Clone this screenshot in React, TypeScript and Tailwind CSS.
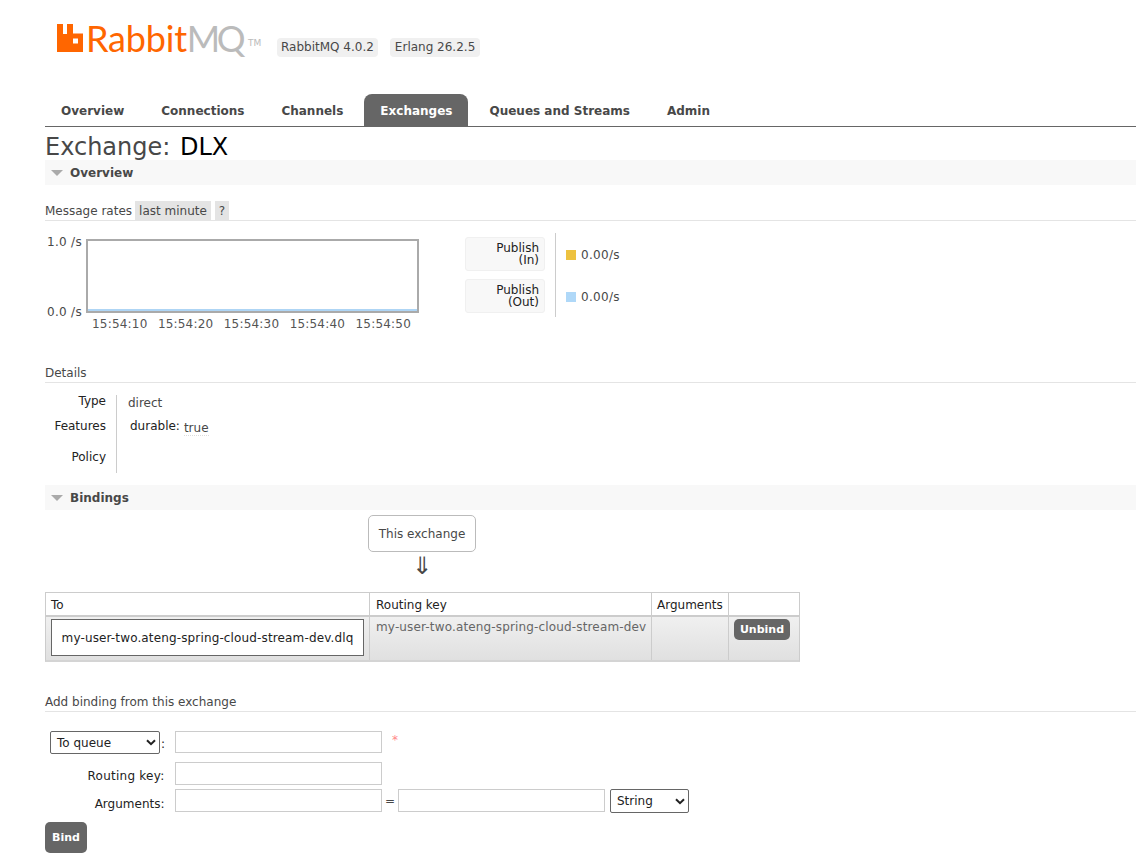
const Section = ({ title }: { title: string }) => (
  <div className="flex items-center h-[25px] bg-[#f8f8f8] pl-[6px] gap-[7px] text-[12px] font-bold text-[#484848]">
    <svg width="12" height="6" viewBox="0 0 12 6">
      <polygon points="0,0 12,0 6,6" fill="#aaaaaa" />
    </svg>
    <span>{title}</span>
  </div>
);

const SubHead = ({ children }: { children: React.ReactNode }) => (
  <div className="flex items-start gap-[3px] border-b border-[#e4e4e4] h-[20px] leading-[21px] text-[12px] text-[#484848]">
    {children}
  </div>
);

const tabs = ["Overview", "Connections", "Channels", "Exchanges", "Queues and Streams", "Admin"];
const times = ["15:54:10", "15:54:20", "15:54:30", "15:54:40", "15:54:50"];

function Chart() {
  return (
    <div className="flex h-[100px]">
      <div className="w-[41px] flex flex-col justify-between h-[88px] -mt-[1px] pr-[4px] text-[12px] text-[#484848] text-right whitespace-nowrap">
        <div className="-ml-[4px] tracking-[0.3px]">1.0 /s</div>
        <div className="-ml-[4px] tracking-[0.3px]">0.0 /s</div>
      </div>
      <div className="w-[333px] pt-[5px]">
        <div className="h-[74px] border-2 border-[#aaaaaa] bg-white flex flex-col justify-end">
          <div className="h-[2px] bg-[#aed5f5]" />
        </div>
        <div className="flex justify-between pl-[6px] pr-[8px] mt-[2px] text-[12px] tracking-[0.2px] text-[#545454]">
          {times.map((t) => (
            <span key={t}>{t}</span>
          ))}
        </div>
      </div>
    </div>
  );
}

const RateLabel = ({ a, b }: { a: string; b: string }) => (
  <div className="flex items-center h-[42px]">
    <div className="w-[80px] h-[34px] bg-[#f8f8f8] border border-[#f0f0f0] rounded-[3px] text-right pr-[5px] text-[12px] leading-[12px] pt-[4px] text-[#222222]">
      <div>{a}</div>
      <div>{b}</div>
    </div>
  </div>
);

const RateValue = ({ color }: { color: string }) => (
  <div className="flex items-center h-[42px] pt-[2px]">
    <div className="w-[10px] h-[10px]" style={{ background: color }} />
    <div className="ml-[5px] text-[12px] tracking-[0.3px] text-[#484848]">0.00/s</div>
  </div>
);

function Chevron() {
  return (
    <svg width="10" height="7" viewBox="0 0 10 7">
      <path d="M1 1.2L5 5.2L9 1.2" fill="none" stroke="#222222" strokeWidth="2" />
    </svg>
  );
}

const inputCls = "block border border-[#cccccc] bg-white w-[207px]";

export default function App() {
  return (
    <div className="w-[1136px] h-[861px] overflow-hidden bg-white pl-[45px] font-['DejaVu_Sans','Liberation_Sans',sans-serif] text-[12px] text-[#484848]">
      <div className="h-[94px] flex items-start">
        <div className="flex items-center shrink-0 w-[206px] ml-[12px] mt-[24px] h-[28px]">
          <svg width="26" height="28" viewBox="0 0 26 28" className="shrink-0">
            <path
              d="M0 0H6V10H10V0H16V9.5H26V28H0ZM16 14.5V19.5H21V14.5Z"
              fill="#ff6600"
              fillRule="evenodd"
            />
          </svg>
          <span className="ml-[3px] font-['Lato',sans-serif] text-[36px] leading-[28px] tracking-[-0.2px] whitespace-nowrap text-[#ff6600]">
            Rabbit<span className="text-[#bbbbbb] tracking-[-3.5px]">MQ</span>
          </span>
          <span className="ml-[6px] mt-[12px] text-[9px] text-[#bbbbbb]">TM</span>
        </div>
        <div className="flex gap-[12px] ml-[14px] mt-[38px]">
          <span className="bg-[#f0f0f0] rounded-[4px] px-[4px] h-[19px] leading-[19px]">RabbitMQ 4.0.2</span>
          <span className="bg-[#f0f0f0] rounded-[4px] px-[5px] h-[19px] leading-[19px]">Erlang 26.2.5</span>
        </div>
      </div>
      <div className="flex h-[33px] border-b border-[#666666] gap-[5px] text-[12px] font-bold">
        {tabs.map((t) => (
          <div
            key={t}
            className={
              t === "Exchanges"
                ? "h-[32px] px-[16px] leading-[34px] rounded-t-[8px] bg-[#666666] text-white"
                : "h-[32px] px-[16px] leading-[34px] text-[#484848]"
            }
          >
            {t}
          </div>
        ))}
      </div>
      <h1 className="text-[24px] leading-[41px] h-[33px] text-[#484848]">
        Exchange: <span className="ml-[2px] text-black">DLX</span>
      </h1>
      <Section title="Overview" />

      <div className="h-[16px]" />
      <SubHead>
        <span>Message rates</span>
        <span className="bg-[#e4e4e4] px-[4px] h-[19px]">last minute</span>
        <span className="ml-[1px] bg-[#e4e4e4] px-[4px] h-[19px]">?</span>
      </SubHead>
      <div className="flex mt-[13px]">
        <Chart />
        <div className="ml-[46px] -mt-[1px] flex h-[84px]">
          <div className="w-[91px] border-r border-[#cccccc]">
            <RateLabel a="Publish" b="(In)" />
            <RateLabel a="Publish" b="(Out)" />
          </div>
          <div className="pl-[10px]">
            <RateValue color="#edc240" />
            <RateValue color="#afd8f8" />
          </div>
        </div>
      </div>

      <div className="h-[29px]" />
      <SubHead>Details</SubHead>
      <div className="flex mt-[12px] h-[78px]">
        <div className="w-[72px] border-r border-[#cccccc] pr-[10px] text-right text-[#222222]">
          <div className="h-[25px] leading-[12px]">Type</div>
          <div className="h-[31px] leading-[12px]">Features</div>
          <div className="leading-[12px]">Policy</div>
        </div>
        <div className="pl-[11px] pt-[1px]">
          <div className="h-[24px] leading-[14px]">direct</div>
          <div className="flex ml-[2px]">
            <span className="text-[#222222] leading-[12px]">durable:</span>
            <span className="ml-[4px] mt-[2px] leading-[12px] pb-[1px] border-b border-dotted border-[#dddddd]">true</span>
          </div>
        </div>
      </div>

      <div className="h-[12px]" />
      <Section title="Bindings" />

      <div className="h-[5px]" />
      <div className="flex flex-col items-center w-[754px]">
        <div className="w-[108px] h-[37px] border border-[#bbbbbb] rounded-[5px] leading-[37px] text-center">
          This exchange
        </div>
        <div className="h-[28px] leading-[28px] text-[24px] font-['Liberation_Sans','DejaVu_Sans',sans-serif] text-[#484848]">⇓</div>
      </div>
      <div className="h-[12px]" />

      <div className="w-[755px] border border-[#cccccc] border-b-[2px] border-b-[#d4d4d4]">
        <div className="flex h-[24px] leading-[25px] border-b-[2px] border-[#cccccc] text-[#222222]">
          <div className="w-[324px] px-[5px] border-r border-[#cccccc]">To</div>
          <div className="w-[282px] pl-[6px] border-r border-[#cccccc]">Routing key</div>
          <div className="w-[77px] px-[5px] border-r border-[#cccccc]">Arguments</div>
          <div className="flex-1" />
        </div>
        <div className="flex h-[43px] bg-linear-to-b from-[#f0f0f0] to-[#e0e0e0]">
          <div className="w-[324px] pl-[5px] pt-[2px] border-r border-[#cccccc]">
            <div className="w-[313px] h-[37px] border border-[#666666] bg-white text-center leading-[37px] tracking-[0.14px] text-[#222222] whitespace-nowrap">
              my-user-two.ateng-spring-cloud-stream-dev.dlq
            </div>
          </div>
          <div className="w-[282px] pl-[6px] pt-[3px] leading-[14px] tracking-[0.15px] border-r border-[#cccccc] text-[#666666] whitespace-nowrap overflow-hidden">
            my-user-two.ateng-spring-cloud-stream-dev
          </div>
          <div className="w-[77px] border-r border-[#cccccc]" />
          <div className="flex-1 pl-[5px] pt-[2px]">
            <div className="w-[56px] h-[21px] bg-[#666666] rounded-[5px] text-white text-[11px] font-bold text-center leading-[21px]">
              Unbind
            </div>
          </div>
        </div>
      </div>

      <div className="h-[30px]" />
      <SubHead>Add binding from this exchange</SubHead>

      <div className="mt-[19px] flex items-start text-[#222222]">
        <div className="ml-[5px] w-[110px] h-[23px] border border-[#666666] rounded-[2px] bg-white flex items-center justify-between pl-[6px] pr-[3px]">
          <span>To queue</span>
          <Chevron />
        </div>
        <span className="ml-[1px] mt-[4px] w-[14px]">:</span>
        <div className={`${inputCls} h-[22px]`} />
        <span className="ml-[10px] text-[#ff8888]">*</span>
      </div>
      <div className="mt-[8px] flex items-start text-[#222222]">
        <div className="w-[119.5px] pt-[5px] text-right tracking-[0.25px]">Routing key:</div>
        <div className={`${inputCls} h-[23px] ml-[10.5px]`} />
      </div>
      <div className="mt-[4px] flex items-start text-[#222222]">
        <div className="w-[119.5px] pt-[6px] text-right">Arguments:</div>
        <div className={`${inputCls} h-[23px] ml-[10.5px]`} />
        <span className="w-[16px] pt-[3px] text-center text-[#484848]">=</span>
        <div className={`${inputCls} h-[23px]`} />
        <div className="ml-[5px] w-[79px] h-[24px] border border-[#666666] rounded-[2px] bg-white flex items-center justify-between pl-[6px] pr-[3px]">
          <span>String</span>
          <Chevron />
        </div>
      </div>
      <div className="mt-[9px] w-[42px] h-[31px] bg-[#666666] rounded-[5px] text-white text-[11px] font-bold text-center leading-[31px]">
        Bind
      </div>
    </div>
  );
}
